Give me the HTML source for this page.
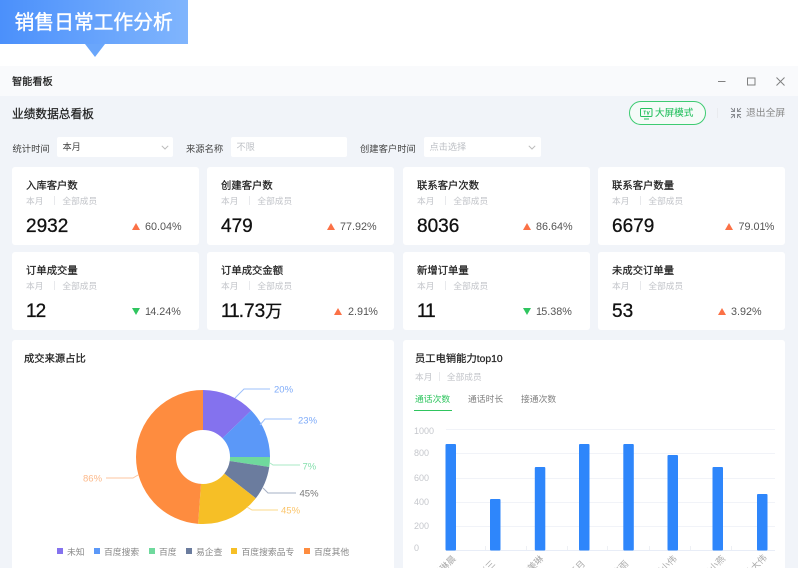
<!DOCTYPE html>
<html><head><meta charset="utf-8"><style>
*{box-sizing:border-box;margin:0;padding:0}
html,body{width:798px;height:568px;overflow:hidden;background:#fff}
body{position:relative;font-family:"Liberation Sans","Noto Sans CJK SC",sans-serif;color:#222}
.a{position:absolute;white-space:nowrap}
.m{-webkit-text-stroke:.25px currentColor}
.card{position:absolute;width:187px;height:78px;background:#fff;border-radius:3px}
.card .t{position:absolute;left:14px;top:11.500px;font-size:10.300px;line-height:16px;color:#222;-webkit-text-stroke:.25px #222;letter-spacing:.05px}
.card .s{position:absolute;left:14px;top:27.500px;font-size:8.700px;line-height:13px;color:#c2c4c9;white-space:nowrap}
.card .s i{display:inline-block;width:1px;height:9px;background:#e8e9ec;margin:0 7.500px 0 10.500px;vertical-align:-1px}
.card .n{position:absolute;left:14px;top:46.500px;font-size:19px;line-height:26px;color:#111;white-space:nowrap;-webkit-text-stroke:.3px #111}
.card .n b{font-weight:400;letter-spacing:-1px}
.card .p{position:absolute;top:52.500px;font-size:10.800px;line-height:14px;color:#555;white-space:nowrap}
.card .p b{font-weight:400;letter-spacing:-.8px}
.up,.dn{position:absolute;top:56px;width:0;height:0;border-left:4.500px solid transparent;border-right:4.500px solid transparent}
.up{border-bottom:7.500px solid #fb7146}
.dn{border-top:7.500px solid #2fc55f}
.sel{position:absolute;top:137px;height:20px;background:#fff;border-radius:2px;font-size:9.200px;line-height:21px;padding-left:5.500px}
.lab{position:absolute;top:141.500px;font-size:9.300px;line-height:14px;color:#444}
</style></head><body>
<div class="a" style="left:0;top:0;width:188px;height:44px;background:linear-gradient(90deg,#4b90fb,#80b5fd)"></div>
<div class="a" style="left:85px;top:44px;width:0;height:0;border-left:10.500px solid transparent;border-right:10.500px solid transparent;border-top:13px solid #6aa6fb"></div>
<div class="a" style="left:14.500px;top:10px;font-size:19.800px;line-height:27px;color:#fff;-webkit-text-stroke:.4px #fff">销售日常工作分析</div>

<div class="a" style="left:0;top:66px;width:798px;height:30px;background:#f9fafc"></div>
<div class="a" style="left:0;top:96px;width:798px;height:472px;background:#f1f4f9"></div>
<div class="a m" style="left:12px;top:74.500px;font-size:10.200px;line-height:15px;color:#222">智能看板</div>
<svg class="a" style="left:710px;top:70px" width="80" height="22" fill="none" stroke="#808080" stroke-width="1"><path d="M8 11.500h7.500"/><rect x="37.500" y="8" width="7.500" height="7"/><path d="M66.500 7.500l8 8M74.500 7.500l-8 8"/></svg>

<div class="a m" style="left:12px;top:105.500px;font-size:11.700px;line-height:18px;color:#222">业绩数据总看板</div>
<div class="a" style="left:628.500px;top:101px;width:77px;height:24px;border:1px solid #3ecb72;border-radius:12px;background:#f5fbf8"></div>
<svg class="a" style="left:640px;top:108px" width="13" height="12" fill="none" stroke="#27c060" stroke-width="1"><rect x=".5" y=".5" width="11.500" height="8" rx="1"/><path d="M4 11h5"/><path d="M3.500 3h2.500M4.700 3v3.500M7 3l1 3.500L9.500 3" stroke-width=".8"/></svg>
<div class="a" style="left:655px;top:106px;font-size:9.600px;line-height:15px;color:#27c060;-webkit-text-stroke:.1px #27c060">大屏模式</div>
<div class="a" style="left:716.500px;top:108px;width:1px;height:10px;background:#e9ebef"></div>
<svg class="a" style="left:730px;top:107px" width="12" height="12" fill="none" stroke="#8a8d92" stroke-width="1"><path d="M1 1l3 3M11 1L8 4M1 11l3-3M11 11L8 8M4.500 1v3.500H1M7.500 1v3.500H11M4.500 11V7.500H1M7.500 11V7.500H11"/></svg>
<div class="a" style="left:746px;top:106px;font-size:9.800px;line-height:15px;color:#888">退出全屏</div>

<div class="lab" style="left:12.500px">统计时间</div>
<div class="sel" style="left:57px;width:116px;color:#444">本月<svg class="a" style="right:4px;top:8px" width="8" height="5" fill="none" stroke="#bbb"><path d="M.8.800L4 4 7.200.800"/></svg></div>
<div class="lab" style="left:186px">来源名称</div>
<div class="sel" style="left:231px;width:116px;color:#bcbfc4">不限</div>
<div class="lab" style="left:360px">创建客户时间</div>
<div class="sel" style="left:424px;width:117px;color:#bcbfc4">点击选择<svg class="a" style="right:5px;top:8px" width="8" height="5" fill="none" stroke="#bbb"><path d="M.8.800L4 4 7.200.800"/></svg></div>

<div class="card" style="left:12px;top:167px"><div class="t">入库客户数</div><div class="s">本月<i></i>全部成员</div><div class="n">2932</div><div class="up" style="left:120px"></div><div class="p" style="left:133px">60.04%</div></div>
<div class="card" style="left:207px;top:167px"><div class="t">创建客户数</div><div class="s">本月<i></i>全部成员</div><div class="n">479</div><div class="up" style="left:120px"></div><div class="p" style="left:133px">77.92%</div></div>
<div class="card" style="left:403px;top:167px"><div class="t">联系客户次数</div><div class="s">本月<i></i>全部成员</div><div class="n">8036</div><div class="up" style="left:119.500px"></div><div class="p" style="left:133px">86.64%</div></div>
<div class="card" style="left:598px;top:167px"><div class="t">联系客户数量</div><div class="s">本月<i></i>全部成员</div><div class="n">6679</div><div class="up" style="left:127px"></div><div class="p" style="left:140.500px">79.0<b>1</b>%</div></div>

<div class="card" style="left:12px;top:252px"><div class="t">订单成交量</div><div class="s">本月<i></i>全部成员</div><div class="n"><b>1</b>2</div><div class="dn" style="left:120px"></div><div class="p" style="left:133px"><b>1</b>4.24%</div></div>
<div class="card" style="left:207px;top:252px"><div class="t">订单成交金额</div><div class="s">本月<i></i>全部成员</div><div class="n"><b>11</b>.73<span style="font-size:17px">万</span></div><div class="up" style="left:127px"></div><div class="p" style="left:141px">2.9<b>1</b>%</div></div>
<div class="card" style="left:403px;top:252px"><div class="t">新增订单量</div><div class="s">本月<i></i>全部成员</div><div class="n"><b>11</b></div><div class="dn" style="left:119.500px"></div><div class="p" style="left:133px"><b>1</b>5.38%</div></div>
<div class="card" style="left:598px;top:252px"><div class="t">未成交订单量</div><div class="s">本月<i></i>全部成员</div><div class="n">53</div><div class="up" style="left:119.500px"></div><div class="p" style="left:133px">3.92%</div></div>

<div class="a" style="left:12px;top:340px;width:382px;height:228px;background:#fff;border-radius:3px 3px 0 0"></div>
<div class="a" style="left:403px;top:340px;width:382px;height:228px;background:#fff;border-radius:3px 3px 0 0"></div>
<div class="a m" style="left:24px;top:352px;font-size:10.300px;line-height:16px">成交来源占比</div>

<svg class="a" style="left:0;top:340px" width="400" height="228" viewBox="0 340 400 228" fill="none">
<g stroke-width="40" transform="rotate(-90 203 457)">
<circle cx="203" cy="457" r="47" pathLength="360" stroke="#8472ee" stroke-dasharray="46 314"/>
<circle cx="203" cy="457" r="47" pathLength="360" stroke="#5b98f8" stroke-dasharray="44 316" stroke-dashoffset="-46"/>
<circle cx="203" cy="457" r="47" pathLength="360" stroke="#6fd99d" stroke-dasharray="8.600 351.400" stroke-dashoffset="-90"/>
<circle cx="203" cy="457" r="47" pathLength="360" stroke="#6b7c9e" stroke-dasharray="29.400 330.600" stroke-dashoffset="-98.600"/>
<circle cx="203" cy="457" r="47" pathLength="360" stroke="#f6bf26" stroke-dasharray="56.300 303.700" stroke-dashoffset="-128"/>
<circle cx="203" cy="457" r="47" pathLength="360" stroke="#fe8c3f" stroke-dasharray="175.700 184.300" stroke-dashoffset="-184.300"/>
</g>
<path d="M235 398l9-9h26" stroke="#9dc0fb"/><path d="M260 425l5-6h27" stroke="#9dc0fb"/><path d="M270 463l3 2h27" stroke="#a9e8c6"/><path d="M263 488l5 5h28" stroke="#a6b0c4"/><path d="M247 507l5 3h26" stroke="#fbd98a"/><path d="M138 475l-5 3h-27" stroke="#fcc69f"/>
<g font-family="Liberation Sans" font-size="9.500">
<text x="274" y="392.500" fill="#7eabf9">20%</text><text x="298" y="423.500" fill="#7eabf9">23%</text><text x="302.500" y="469.500" fill="#84dfac">7%</text><text x="299.500" y="496.500" fill="#777">45%</text><text x="281" y="513.500" fill="#fbc56b">45%</text><text x="83" y="481.500" fill="#fcb98a">86%</text>
</g>
<g font-family="Liberation Sans,Noto Sans CJK SC,sans-serif" font-size="8.800" fill="#888">
<rect x="57" y="548" width="6" height="6" fill="#8472ee"/><text x="67" y="555">未知</text>
<rect x="94" y="548" width="6" height="6" fill="#5b98f8"/><text x="104" y="555">百度搜索</text>
<rect x="149" y="548" width="6" height="6" fill="#6fd99d"/><text x="159" y="555">百度</text>
<rect x="186" y="548" width="6" height="6" fill="#6b7c9e"/><text x="196" y="555">易企查</text>
<rect x="231" y="548" width="6" height="6" fill="#f6bf26"/><text x="241.500" y="555">百度搜索品专</text>
<rect x="304" y="548" width="6" height="6" fill="#fe8c3f"/><text x="314" y="555">百度其他</text>
</g>
</svg>

<div class="a m" style="left:415px;top:352px;font-size:10.300px;line-height:16px">员工电销能力top10</div>
<div class="a" style="left:415px;top:370.500px;font-size:8.700px;line-height:13px;color:#c2c4c9">本月<span style="display:inline-block;width:1px;height:9px;background:#e8e9ec;margin:0 7px 0 6.500px;vertical-align:-1px"></span>全部成员</div>
<div class="a" style="left:415px;top:393px;font-size:8.800px;line-height:13px;color:#2fc55f">通话次数</div>
<div class="a" style="left:468px;top:393px;font-size:8.800px;line-height:13px;color:#808080">通话时长</div>
<div class="a" style="left:521px;top:393px;font-size:8.800px;line-height:13px;color:#808080">接通次数</div>
<div class="a" style="left:414px;top:409.500px;width:38px;height:1.500px;background:#2fc55f"></div>

<svg class="a" style="left:400px;top:420px" width="398" height="148" viewBox="400 420 398 148" fill="none">
<g stroke="#f1f3f8"><path d="M446 429.500h329M446 453.500h329M446 478.500h329M446 502.500h329M446 526.500h329"/></g>
<path d="M446 550.500h329" stroke="#e8edf7"/>
<g stroke="#eef0f4"><path d="M485.500 546v4M526.500 546v4M567.500 546v4M607.500 546v4M649.500 546v4M690.500 546v4M731.500 546v4"/></g>
<g font-family="Liberation Sans" font-size="9" fill="#c5c7cc">
<text x="414" y="434">1000</text><text x="414" y="456">800</text><text x="414" y="481">600</text><text x="414" y="505">400</text><text x="414" y="529">200</text><text x="414" y="551">0</text>
</g>
<g fill="#2e86fb">
<rect x="445.500" y="444" width="10.500" height="106.500" rx="1"/>
<rect x="490" y="499" width="10.500" height="51.500" rx="1"/>
<rect x="534.800" y="467" width="10.500" height="83.500" rx="1"/>
<rect x="579" y="444" width="10.500" height="106.500" rx="1"/>
<rect x="623.300" y="444" width="10.500" height="106.500" rx="1"/>
<rect x="667.500" y="455" width="10.500" height="95.500" rx="1"/>
<rect x="712.500" y="467" width="10.500" height="83.500" rx="1"/>
<rect x="757" y="494" width="10.500" height="56.500" rx="1"/>
</g>
<g font-family="Liberation Sans,Noto Sans CJK SC,sans-serif" font-size="9" fill="#aaa" text-anchor="end">
<text transform="translate(456.400 559.300) rotate(-45)">周琳晨</text>
<text transform="translate(495.700 564.300) rotate(-45)">张三</text>
<text transform="translate(544 559.300) rotate(-45)">李美琳</text>
<text transform="translate(585.700 564.300) rotate(-45)">王月</text>
<text transform="translate(629 564.300) rotate(-45)">陈雨</text>
<text transform="translate(677.400 559.300) rotate(-45)">刘小伟</text>
<text transform="translate(725.700 559.300) rotate(-45)">赵小燕</text>
<text transform="translate(767.400 558.300) rotate(-45)">孙大伟</text>
</g>
</svg>
</body></html>
